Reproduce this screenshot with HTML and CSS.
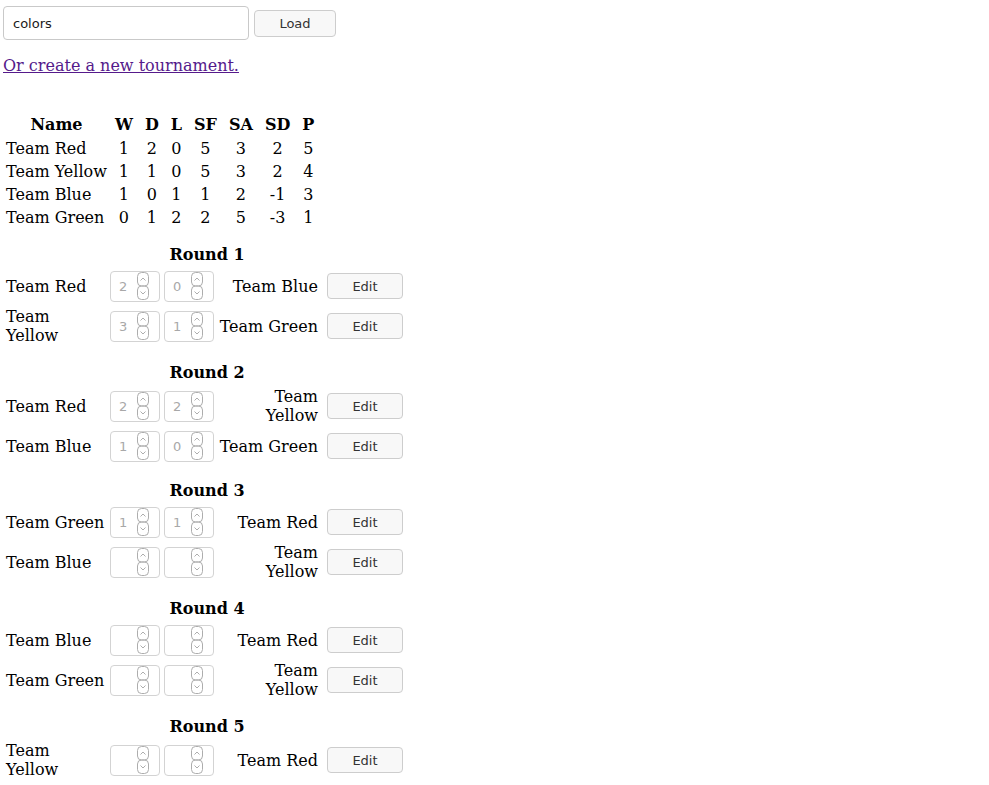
FILE: index.html
```html
<!DOCTYPE html>
<html>
<head>
<meta charset="utf-8">
<title>Tournament</title>
<link rel="stylesheet" href="styles.css">
</head>
<body>
<div class="loader">
  <input class="name-input" type="text" value="colors">
  <button class="btn load-btn">Load</button>
</div>
<p class="new"><a href="#">Or create a new tournament.</a></p>

<table class="standings">
  <thead>
    <tr><th class="team">Name</th><th>W</th><th>D</th><th>L</th><th>SF</th><th>SA</th><th>SD</th><th>P</th></tr>
  </thead>
  <tbody>
    <tr><td class="team">Team Red</td><td>1</td><td>2</td><td>0</td><td>5</td><td>3</td><td>2</td><td>5</td></tr>
    <tr><td class="team">Team Yellow</td><td>1</td><td>1</td><td>0</td><td>5</td><td>3</td><td>2</td><td>4</td></tr>
    <tr><td class="team">Team Blue</td><td>1</td><td>0</td><td>1</td><td>1</td><td>2</td><td>-1</td><td>3</td></tr>
    <tr><td class="team">Team Green</td><td>0</td><td>1</td><td>2</td><td>2</td><td>5</td><td>-3</td><td>1</td></tr>
  </tbody>
</table>

<div class="rounds">
  <section class="round">
    <h4 class="round-title">Round 1</h4>
    <div class="matches">
      <div class="home">Team Red</div>
      <div class="score"><input type="number" value="2" disabled><svg class="spin" viewBox="0 0 12 28"><rect x="0.5" y="0.5" width="11" height="13.5" rx="4"/><rect x="0.5" y="14" width="11" height="13.5" rx="4"/><path d="M3.5 8.5 L6 6 L8.5 8.5"/><path d="M3.5 19.5 L6 22 L8.5 19.5"/></svg></div>
      <div class="score"><input type="number" value="0" disabled><svg class="spin" viewBox="0 0 12 28"><rect x="0.5" y="0.5" width="11" height="13.5" rx="4"/><rect x="0.5" y="14" width="11" height="13.5" rx="4"/><path d="M3.5 8.5 L6 6 L8.5 8.5"/><path d="M3.5 19.5 L6 22 L8.5 19.5"/></svg></div>
      <div class="away">Team Blue</div>
      <div class="act"><button class="btn edit-btn">Edit</button></div>

      <div class="home">Team Yellow</div>
      <div class="score"><input type="number" value="3" disabled><svg class="spin" viewBox="0 0 12 28"><rect x="0.5" y="0.5" width="11" height="13.5" rx="4"/><rect x="0.5" y="14" width="11" height="13.5" rx="4"/><path d="M3.5 8.5 L6 6 L8.5 8.5"/><path d="M3.5 19.5 L6 22 L8.5 19.5"/></svg></div>
      <div class="score"><input type="number" value="1" disabled><svg class="spin" viewBox="0 0 12 28"><rect x="0.5" y="0.5" width="11" height="13.5" rx="4"/><rect x="0.5" y="14" width="11" height="13.5" rx="4"/><path d="M3.5 8.5 L6 6 L8.5 8.5"/><path d="M3.5 19.5 L6 22 L8.5 19.5"/></svg></div>
      <div class="away">Team Green</div>
      <div class="act"><button class="btn edit-btn">Edit</button></div>
    </div>
  </section>

  <section class="round">
    <h4 class="round-title">Round 2</h4>
    <div class="matches">
      <div class="home">Team Red</div>
      <div class="score"><input type="number" value="2" disabled><svg class="spin" viewBox="0 0 12 28"><rect x="0.5" y="0.5" width="11" height="13.5" rx="4"/><rect x="0.5" y="14" width="11" height="13.5" rx="4"/><path d="M3.5 8.5 L6 6 L8.5 8.5"/><path d="M3.5 19.5 L6 22 L8.5 19.5"/></svg></div>
      <div class="score"><input type="number" value="2" disabled><svg class="spin" viewBox="0 0 12 28"><rect x="0.5" y="0.5" width="11" height="13.5" rx="4"/><rect x="0.5" y="14" width="11" height="13.5" rx="4"/><path d="M3.5 8.5 L6 6 L8.5 8.5"/><path d="M3.5 19.5 L6 22 L8.5 19.5"/></svg></div>
      <div class="away">Team Yellow</div>
      <div class="act"><button class="btn edit-btn">Edit</button></div>

      <div class="home">Team Blue</div>
      <div class="score"><input type="number" value="1" disabled><svg class="spin" viewBox="0 0 12 28"><rect x="0.5" y="0.5" width="11" height="13.5" rx="4"/><rect x="0.5" y="14" width="11" height="13.5" rx="4"/><path d="M3.5 8.5 L6 6 L8.5 8.5"/><path d="M3.5 19.5 L6 22 L8.5 19.5"/></svg></div>
      <div class="score"><input type="number" value="0" disabled><svg class="spin" viewBox="0 0 12 28"><rect x="0.5" y="0.5" width="11" height="13.5" rx="4"/><rect x="0.5" y="14" width="11" height="13.5" rx="4"/><path d="M3.5 8.5 L6 6 L8.5 8.5"/><path d="M3.5 19.5 L6 22 L8.5 19.5"/></svg></div>
      <div class="away">Team Green</div>
      <div class="act"><button class="btn edit-btn">Edit</button></div>
    </div>
  </section>

  <section class="round">
    <h4 class="round-title">Round 3</h4>
    <div class="matches">
      <div class="home">Team Green</div>
      <div class="score"><input type="number" value="1" disabled><svg class="spin" viewBox="0 0 12 28"><rect x="0.5" y="0.5" width="11" height="13.5" rx="4"/><rect x="0.5" y="14" width="11" height="13.5" rx="4"/><path d="M3.5 8.5 L6 6 L8.5 8.5"/><path d="M3.5 19.5 L6 22 L8.5 19.5"/></svg></div>
      <div class="score"><input type="number" value="1" disabled><svg class="spin" viewBox="0 0 12 28"><rect x="0.5" y="0.5" width="11" height="13.5" rx="4"/><rect x="0.5" y="14" width="11" height="13.5" rx="4"/><path d="M3.5 8.5 L6 6 L8.5 8.5"/><path d="M3.5 19.5 L6 22 L8.5 19.5"/></svg></div>
      <div class="away">Team Red</div>
      <div class="act"><button class="btn edit-btn">Edit</button></div>

      <div class="home">Team Blue</div>
      <div class="score"><input type="number" value="" disabled><svg class="spin" viewBox="0 0 12 28"><rect x="0.5" y="0.5" width="11" height="13.5" rx="4"/><rect x="0.5" y="14" width="11" height="13.5" rx="4"/><path d="M3.5 8.5 L6 6 L8.5 8.5"/><path d="M3.5 19.5 L6 22 L8.5 19.5"/></svg></div>
      <div class="score"><input type="number" value="" disabled><svg class="spin" viewBox="0 0 12 28"><rect x="0.5" y="0.5" width="11" height="13.5" rx="4"/><rect x="0.5" y="14" width="11" height="13.5" rx="4"/><path d="M3.5 8.5 L6 6 L8.5 8.5"/><path d="M3.5 19.5 L6 22 L8.5 19.5"/></svg></div>
      <div class="away">Team Yellow</div>
      <div class="act"><button class="btn edit-btn">Edit</button></div>
    </div>
  </section>

  <section class="round">
    <h4 class="round-title">Round 4</h4>
    <div class="matches">
      <div class="home">Team Blue</div>
      <div class="score"><input type="number" value="" disabled><svg class="spin" viewBox="0 0 12 28"><rect x="0.5" y="0.5" width="11" height="13.5" rx="4"/><rect x="0.5" y="14" width="11" height="13.5" rx="4"/><path d="M3.5 8.5 L6 6 L8.5 8.5"/><path d="M3.5 19.5 L6 22 L8.5 19.5"/></svg></div>
      <div class="score"><input type="number" value="" disabled><svg class="spin" viewBox="0 0 12 28"><rect x="0.5" y="0.5" width="11" height="13.5" rx="4"/><rect x="0.5" y="14" width="11" height="13.5" rx="4"/><path d="M3.5 8.5 L6 6 L8.5 8.5"/><path d="M3.5 19.5 L6 22 L8.5 19.5"/></svg></div>
      <div class="away">Team Red</div>
      <div class="act"><button class="btn edit-btn">Edit</button></div>

      <div class="home">Team Green</div>
      <div class="score"><input type="number" value="" disabled><svg class="spin" viewBox="0 0 12 28"><rect x="0.5" y="0.5" width="11" height="13.5" rx="4"/><rect x="0.5" y="14" width="11" height="13.5" rx="4"/><path d="M3.5 8.5 L6 6 L8.5 8.5"/><path d="M3.5 19.5 L6 22 L8.5 19.5"/></svg></div>
      <div class="score"><input type="number" value="" disabled><svg class="spin" viewBox="0 0 12 28"><rect x="0.5" y="0.5" width="11" height="13.5" rx="4"/><rect x="0.5" y="14" width="11" height="13.5" rx="4"/><path d="M3.5 8.5 L6 6 L8.5 8.5"/><path d="M3.5 19.5 L6 22 L8.5 19.5"/></svg></div>
      <div class="away">Team Yellow</div>
      <div class="act"><button class="btn edit-btn">Edit</button></div>
    </div>
  </section>

  <section class="round">
    <h4 class="round-title">Round 5</h4>
    <div class="matches">
      <div class="home">Team Yellow</div>
      <div class="score"><input type="number" value="" disabled><svg class="spin" viewBox="0 0 12 28"><rect x="0.5" y="0.5" width="11" height="13.5" rx="4"/><rect x="0.5" y="14" width="11" height="13.5" rx="4"/><path d="M3.5 8.5 L6 6 L8.5 8.5"/><path d="M3.5 19.5 L6 22 L8.5 19.5"/></svg></div>
      <div class="score"><input type="number" value="" disabled><svg class="spin" viewBox="0 0 12 28"><rect x="0.5" y="0.5" width="11" height="13.5" rx="4"/><rect x="0.5" y="14" width="11" height="13.5" rx="4"/><path d="M3.5 8.5 L6 6 L8.5 8.5"/><path d="M3.5 19.5 L6 22 L8.5 19.5"/></svg></div>
      <div class="away">Team Red</div>
      <div class="act"><button class="btn edit-btn">Edit</button></div>

      <div class="home">Team Blue</div>
      <div class="score"><input type="number" value="" disabled><svg class="spin" viewBox="0 0 12 28"><rect x="0.5" y="0.5" width="11" height="13.5" rx="4"/><rect x="0.5" y="14" width="11" height="13.5" rx="4"/><path d="M3.5 8.5 L6 6 L8.5 8.5"/><path d="M3.5 19.5 L6 22 L8.5 19.5"/></svg></div>
      <div class="score"><input type="number" value="" disabled><svg class="spin" viewBox="0 0 12 28"><rect x="0.5" y="0.5" width="11" height="13.5" rx="4"/><rect x="0.5" y="14" width="11" height="13.5" rx="4"/><path d="M3.5 8.5 L6 6 L8.5 8.5"/><path d="M3.5 19.5 L6 22 L8.5 19.5"/></svg></div>
      <div class="away">Team Green</div>
      <div class="act"><button class="btn edit-btn">Edit</button></div>
    </div>
  </section>
</div>
</body>
</html>
```
FILE: styles.css
```css
html, body {
  background: #ffffff;
}

body {
  margin: 0;
  padding: 6px 3px 0;
  font-family: "DejaVu Serif", serif;
  font-size: 16px;
  line-height: normal;
  color: #000000;
}

.loader {
  display: flex;
  align-items: center;
  gap: 5px;
}

.name-input {
  box-sizing: border-box;
  width: 246px;
  height: 34px;
  margin: 0;
  padding: 0 9px;
  border: 1px solid #c9c9c9;
  border-radius: 4px;
  background: #ffffff;
  font-family: "DejaVu Sans", sans-serif;
  font-size: 13px;
  color: #1a1a1a;
  outline: none;
}

.btn {
  box-sizing: border-box;
  margin: 0;
  padding: 0;
  border: 1px solid #cdcdcd;
  border-radius: 4px;
  background: #f8f8f8;
  font-family: "DejaVu Sans", sans-serif;
  font-size: 13px;
  color: #333333;
}

.load-btn {
  width: 82px;
  height: 27px;
}

.new {
  margin: 16px 0 0;
}

.new a {
  color: #551a8b;
  text-decoration: underline;
}

.standings {
  margin-top: 37px;
  border-spacing: 2px;
}

.standings th,
.standings td {
  padding: 1px 5px;
  text-align: center;
}

.standings th {
  padding-bottom: 2px;
}

.standings th.team,
.standings td.team {
  padding-left: 1px;
  padding-right: 1px;
}

.standings th.team {
  text-align: center;
}

.standings td.team {
  text-align: left;
}

.rounds {
  margin-top: 15px;
}

.round {
  width: 408px;
  margin-bottom: 17px;
}

.round-title {
  margin: 0 0 4px;
  font-size: 16px;
  font-weight: bold;
  text-align: center;
  line-height: 19px;
}

.matches {
  display: grid;
  grid-template-columns: 100px 50px 50px 100px 86px;
  grid-auto-rows: minmax(36px, auto);
  column-gap: 4px;
  row-gap: 2px;
  padding: 0 3px;
  align-items: center;
}

.home,
.away {
  padding: 1px 0;
}

.home {
  text-align: left;
}

.away {
  text-align: right;
}

.score {
  box-sizing: border-box;
  display: flex;
  align-items: center;
  width: 50px;
  height: 31px;
  border: 1px solid #d3d3d3;
  border-radius: 4px;
  background: #ffffff;
}

.score input {
  -moz-appearance: textfield;
  appearance: textfield;
  box-sizing: border-box;
  width: 26px;
  height: 100%;
  margin: 0;
  padding: 0 0 0 8px;
  border: none;
  background: transparent;
  font-family: "DejaVu Sans", sans-serif;
  font-size: 13px;
  color: #a8a8a8;
  outline: none;
}

.score input::-webkit-inner-spin-button,
.score input::-webkit-outer-spin-button {
  -webkit-appearance: none;
  margin: 0;
  display: none;
}

.spin {
  width: 12px;
  height: 28px;
  flex: none;
}

.spin rect,
.spin path {
  fill: none;
  stroke: #adadad;
  stroke-width: 1;
}

.act {
  display: flex;
  padding-left: 5px;
}

.edit-btn {
  width: 76px;
  height: 26px;
}
```
